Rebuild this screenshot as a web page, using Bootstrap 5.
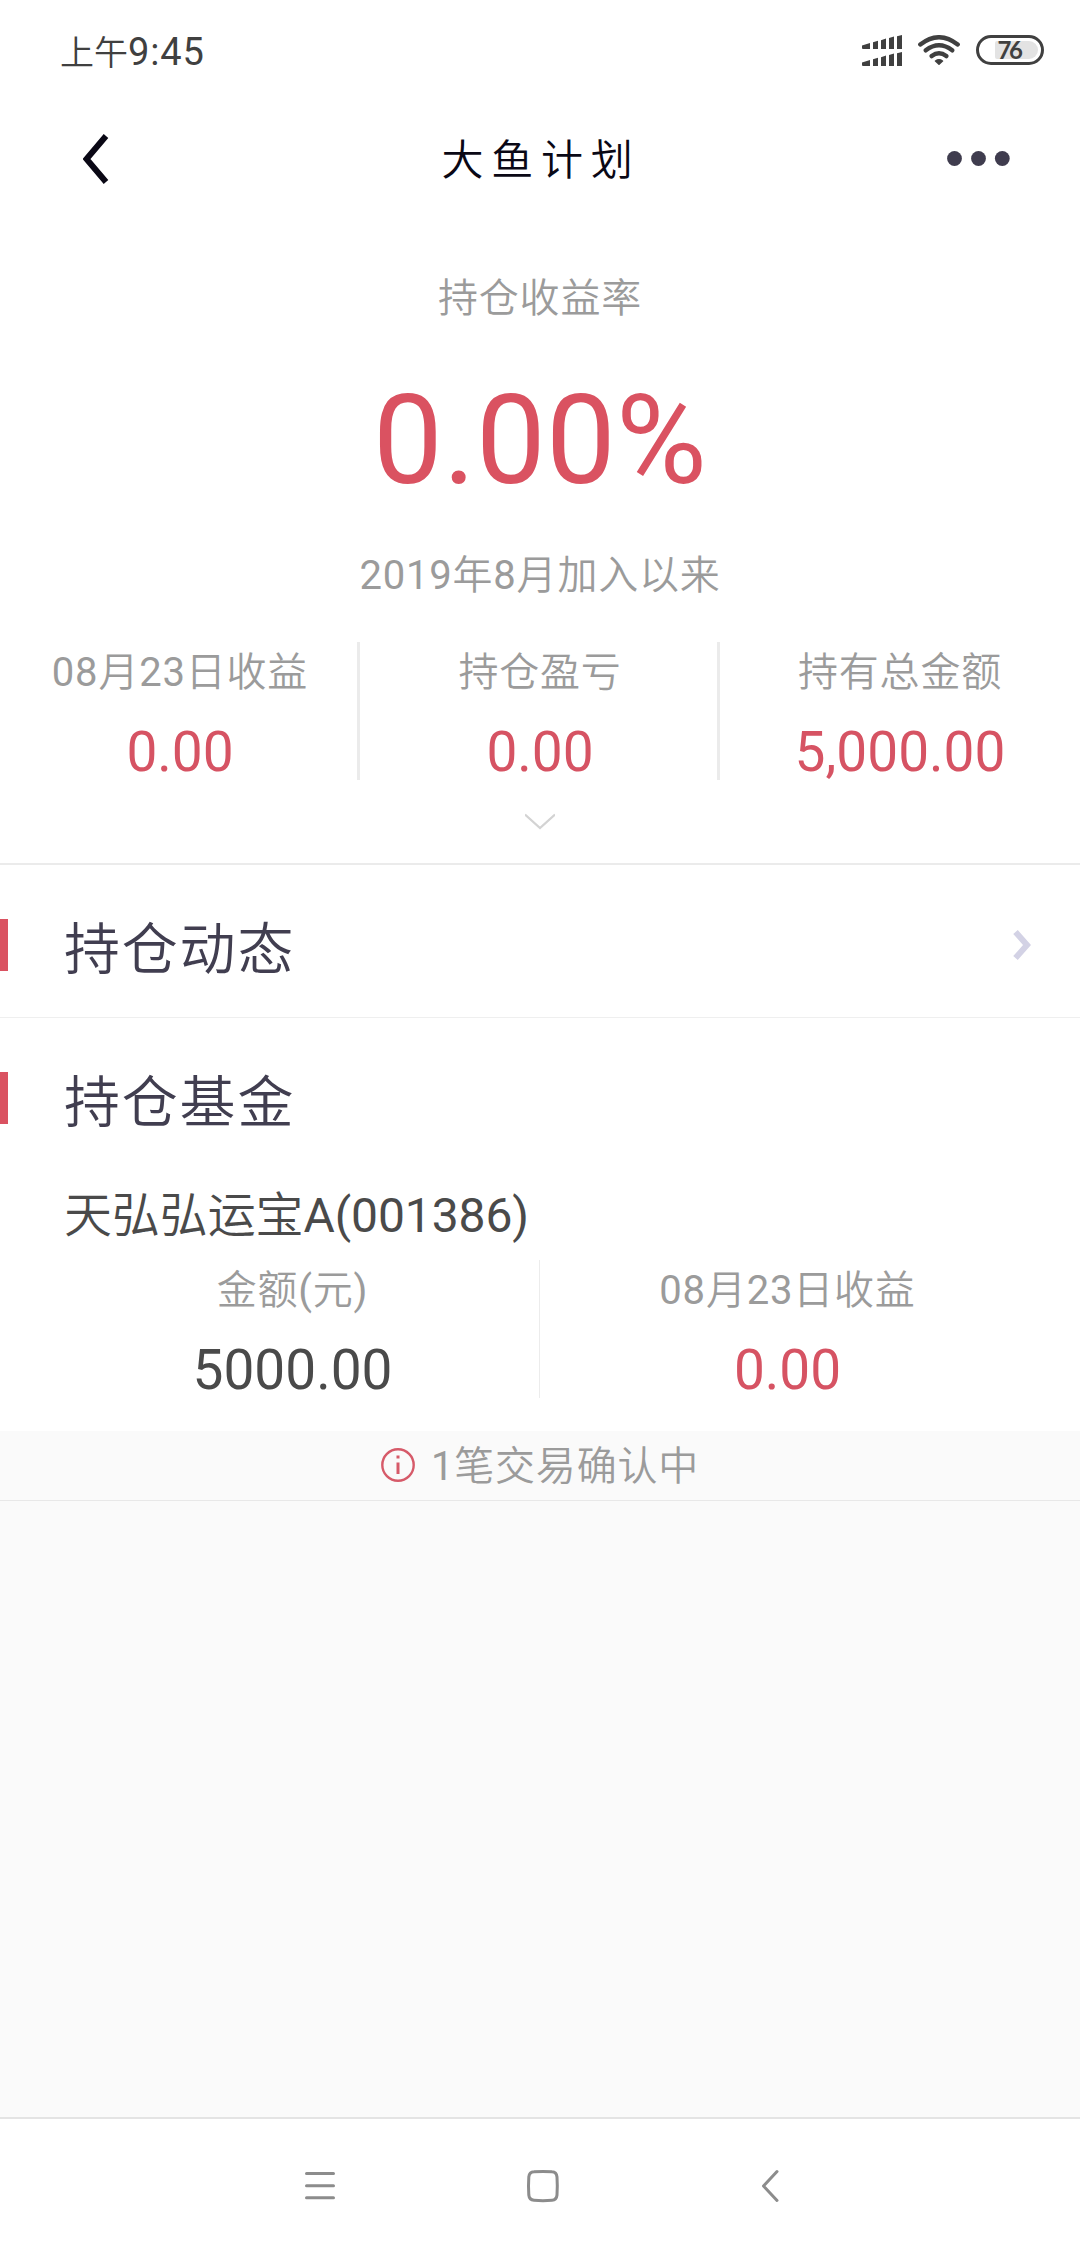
<!DOCTYPE html>
<html lang="zh-CN">
<head>
<meta charset="utf-8">
<meta name="viewport" content="width=device-width, initial-scale=1">
<title>大鱼计划</title>
<link href="https://cdn.jsdelivr.net/npm/bootstrap@5.3.0/dist/css/bootstrap.min.css" rel="stylesheet">
<style>
  body { font-family: Roboto, "Noto Sans CJK SC DemiLight", "Noto Sans CJK SC Light", "Noto Sans CJK SC", sans-serif; font-weight: 400; background: #fafafa; color: #454545; }
  .screen { width: 1080px; height: 2248px; overflow: hidden; }
  .status { height: 104px; padding: 0 36px 0 60px; color: #404040; }
  .clock { font-size: 38px; line-height: 104px; letter-spacing: .9px; }
  .clock .ampm { font-size: 34px; letter-spacing: 0; }
  .signals { gap: 16px; height: 100px; }
  .topbar { height: 112px; padding: 0 70px 0 83px; }
  .topbar svg { margin-top: -3px; }
  .topbar h1 { font-size: 42px; letter-spacing: 7.7px; line-height: 112px; padding: 2px 0 0 26px; color: #0a0815; font-weight: 300; }
  .hero { height: 649px; padding-top: 53px; border-bottom: 2px solid #ebebeb; }
  .caption-line { font-size: 40px; line-height: 60px; letter-spacing: .8px; color: #9b9b9b; white-space: nowrap; }
  .rate { font-size: 124px; line-height: 140px; margin: 42px 0 35px; letter-spacing: .3px; color: #da5261; }
  .figure-value { font-size: 55px; line-height: 56px; margin-top: 21px; color: #4a4a4a; white-space: nowrap; }
  .figure-value.money { color: #d65363; }
  .stats { margin-top: 36px; height: 138px; }
  .stats > .col, .fund-stats > .col { padding-top: 1px; }
  .stats > .col + .col { box-shadow: -3px 0 0 #ebebeb; }
  .expand { height: 83px; padding-top: 33px; }
  .section-row { height: 152px; }
  .accent { width: 8px; height: 52px; margin-top: 54px; background: #da5261; }
  .section-row h2 { font-size: 56px; line-height: 80px; margin: 45px 0 0 56px; letter-spacing: 1.8px; color: #413e50; font-weight: 300; }
  .activity { border-bottom: 1px solid #efefef; height: 153px; }
  .activity .go { margin: 64px 49px 0 auto; }
  .holdings { height: 413px; }
  .holdings .section-row { height: 124px; }
  .fund-name { font-size: 48px; line-height: 60px; margin: 44px 0 14px 64px; letter-spacing: -.1px; color: #4a4a4a; }
  .fund-stats { margin: 0 45px; height: 138px; }
  .fund-stats > .col + .col { box-shadow: -1px 0 0 #ececec; }
  .notice { height: 70px; border-bottom: 1px solid #e8e8e8; gap: 16px; }
  .notice svg { margin-top: -2px; }
  .notice .caption-line { padding-top: 3px; }
  .sysnav { height: 131px; border-top: 2px solid #e4e4e4; }
  .sysnav svg { display: block; }
</style>
</head>
<body>
<div class="screen d-flex flex-column">
  <div class="bg-white">
    <div class="status d-flex justify-content-between">
      <div class="clock"><span class="ampm">上午</span>9:45</div>
      <div class="signals d-flex align-items-center">
        <svg width="40" height="31" viewBox="862 35 40 31" fill="#404040">
          <path d="M862 45.5L870 43V49H863Q862 49 862 48ZM873 42.3L878 40.8V49H873ZM881 40.3L886 38.5V49H881ZM889 38L894 36.5V49H889ZM897 36.3L902 35V49H897Z"/>
          <path d="M862 62.5L870 60V66H863Q862 66 862 65ZM873 59.3L878 57.8V66H873ZM881 57.3L886 55.5V66H881ZM889 55L894 53.5V66H889ZM897 53.3L902 52V66H897Z"/>
        </svg>
        <svg width="42" height="30" viewBox="918 35 42 30" fill="none" stroke="#404040" stroke-width="4.4" stroke-linecap="round">
          <path d="M920.3 44.5Q939 30 957.7 44.5M925.8 50.3Q939 40.3 952.2 50.3M931.7 56.1Q939 50.4 946.3 56.1"/>
          <path d="M935.5 61Q939 58.5 942.5 61L939 64.3Z" fill="#404040" stroke-width="1.5" stroke-linejoin="round"/>
        </svg>
        <svg width="68" height="30" viewBox="0 0 68 30">
          <rect x="1.5" y="1.5" width="65" height="27" rx="13.5" fill="#fff" stroke="#404040" stroke-width="3"/>
          <path d="M21 6H53a9 9 0 0 1 0 18H21a2 2 0 0 1-2-2V8a2 2 0 0 1 2-2Z" fill="#e3e3e3"/>
          <text x="33" y="24" text-anchor="middle" font-family="Lato, sans-serif" font-weight="700" font-size="24" letter-spacing="-2.5" fill="#404040">76</text>
        </svg>
      </div>
    </div>

    <nav class="topbar d-flex justify-content-between align-items-center">
      <svg width="26" height="50" viewBox="83 133 26 50" fill="none" stroke="#0a0815" stroke-width="6"><path d="M106 135L86.5 158L106 181"/></svg>
      <h1 class="mb-0">大鱼计划</h1>
      <svg width="63" height="15" viewBox="0 0 63 15" fill="#3f3c4e"><circle cx="7.5" cy="7.5" r="7.4"/><circle cx="31.5" cy="7.5" r="7.4"/><circle cx="55.3" cy="7.5" r="7.4"/></svg>
    </nav>

    <section class="hero text-center">
      <div class="caption-line">持仓收益率</div>
      <div class="rate">0.00%</div>
      <div class="caption-line">2019年8月加入以来</div>
      <div class="stats row g-0">
        <div class="col"><div class="caption-line">08月23日收益</div><div class="figure-value money">0.00</div></div>
        <div class="col"><div class="caption-line">持仓盈亏</div><div class="figure-value money">0.00</div></div>
        <div class="col"><div class="caption-line">持有总金额</div><div class="figure-value money">5,000.00</div></div>
      </div>
      <div class="expand d-flex justify-content-center">
        <svg width="30" height="17" viewBox="0 0 30 17" fill="none" stroke="#d3d3d3" stroke-width="2.3"><path d="M0 1.5L15 15L30 1.5"/></svg>
      </div>
    </section>

    <section class="activity section-row d-flex align-items-start">
      <div class="accent"></div>
      <h2>持仓动态</h2>
      <svg class="go" width="18" height="32" viewBox="0 0 18 32" fill="none" stroke="#d3d2e5" stroke-width="6"><path d="M2.5 3L14 16L2.5 29"/></svg>
    </section>

    <section class="holdings">
      <div class="section-row d-flex align-items-start">
        <div class="accent"></div>
        <h2>持仓基金</h2>
      </div>
      <div class="fund-name">天弘弘运宝A(001386)</div>
      <div class="fund-stats row g-0 text-center">
        <div class="col"><div class="caption-line">金额(元)</div><div class="figure-value">5000.00</div></div>
        <div class="col"><div class="caption-line">08月23日收益</div><div class="figure-value money">0.00</div></div>
      </div>
    </section>
  </div>

  <div class="notice d-flex align-items-center justify-content-center">
    <svg width="34" height="34" viewBox="0 0 34 34" fill="none" stroke="#d65a69"><circle cx="17" cy="17" r="15.7" stroke-width="2.4"/><path d="M17 14.5V26M17 7.5V10.5" stroke-width="3"/></svg>
    <span class="caption-line">1笔交易确认中</span>
  </div>

  <div class="sysnav bg-white mt-auto d-flex justify-content-center">
    <svg width="480" height="129" viewBox="300 2119 480 129" fill="none" stroke="#8c8c8c" stroke-width="3" stroke-linecap="round" stroke-linejoin="round">
      <path d="M306.5 2173.5H333.5M306.5 2185.7H333.5M306.5 2197.7H333.5"/>
      <path d="M534 2171.8Q543 2171 552 2171.8Q556.5 2172 557 2177Q557.6 2186 557 2195Q556.5 2200 552 2200.3Q543 2201 534 2200.3Q529.3 2200 528.8 2195Q528.2 2186 528.8 2177Q529.3 2172 534 2171.8Z"/>
      <path d="M777 2171.5L763.5 2186L777 2200.5"/>
    </svg>
  </div>
</div>
<script src="https://cdn.jsdelivr.net/npm/bootstrap@5.3.0/dist/js/bootstrap.bundle.min.js"></script>
</body>
</html>
